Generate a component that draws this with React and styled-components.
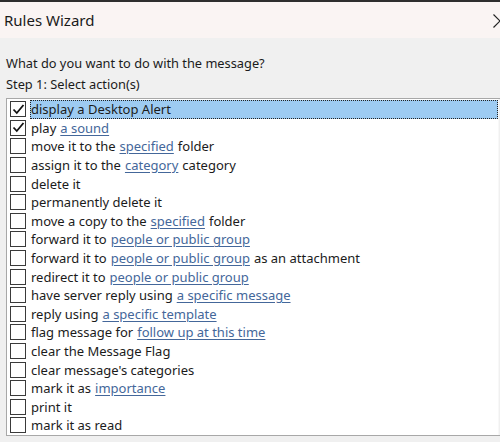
import React from 'react';
import styled, { createGlobalStyle } from 'styled-components';

const GlobalStyle = createGlobalStyle`
	body {
		margin: 0;
		overflow: hidden;
		background: #f0f0f0;
		font-family: 'Noto Sans', 'Open Sans', sans-serif;
		color: #1b1b1b;
	}
`;

const Dialog = styled.div`
	width: 521px;
	height: 442px;
	display: flex;
	flex-direction: column;
	background: #f0f0f0;
`;

const TitleBar = styled.div`
	height: 36px;
	border-top: 2px solid #2e2e2e;
	background: #faf4f3;
	display: flex;
	align-items: center;
	justify-content: space-between;
	padding: 0 14px 0 4px;
`;

const Title = styled.div`
	font-size: 15px;
	color: #1a1a1a;
`;

const CloseIcon = styled.svg`
	width: 14px;
	height: 14px;
	margin-top: 2px;
`;

const Body = styled.div`
	padding: 15px 0 0 6px;
	display: flex;
	flex-direction: column;
`;

const Prompt = styled.div`
	font-size: 12.8px;
	line-height: 20.5px;
`;

const ListBox = styled.div`
	margin-top: 4px;
	height: 336px;
	border: 1px solid #a8a8a8;
	background: #fff;
	display: flex;
`;

const Items = styled.div`
	flex: 1;
	padding-top: 1px;
	display: flex;
	flex-direction: column;
`;

const Row = styled.div`
	height: 18.6px;
	display: flex;
	align-items: center;
	font-size: 13px;
`;

const Box = styled.span`
	width: 14px;
	height: 14px;
	margin: 0 4px 0 3px;
	border: 1px solid #3a3a3a;
	background: #fff;
	flex: none;
	display: flex;
	align-items: center;
	justify-content: center;
`;

const Label = styled.span`
	flex: 1;
	height: 100%;
	display: flex;
	align-items: center;
	padding-left: 1px;
	white-space: nowrap;
	background: ${p => (p.$selected ? '#9dcbf2' : 'transparent')};
	outline: ${p => (p.$selected ? '1px dotted #222' : 'none')};
	outline-offset: -1px;
`;

const Link = styled.span`
	color: #44679a;
	text-decoration: underline;
	text-underline-offset: 2px;
	margin: 0 4px;
`;

const ScrollBar = styled.div`
	width: 21px;
	flex: none;
	background: #f0f0f0;
	border-left: 1px solid #f8f8f8;
	display: flex;
	justify-content: center;
	padding-top: 23px;
`;

const Thumb = styled.div`
	width: 7px;
	height: 249px;
	background: #858585;
`;

const actions = [
	['display a Desktop Alert'],
	['play', 'a sound'],
	['move it to the', 'specified', 'folder'],
	['assign it to the', 'category', 'category'],
	['delete it'],
	['permanently delete it'],
	['move a copy to the', 'specified', 'folder'],
	['forward it to', 'people or public group'],
	['forward it to', 'people or public group', 'as an attachment'],
	['redirect it to', 'people or public group'],
	['have server reply using', 'a specific message'],
	['reply using', 'a specific template'],
	['flag message for', 'follow up at this time'],
	['clear the Message Flag'],
	["clear message's categories"],
	['mark it as', 'importance'],
	['print it'],
	['mark it as read'],
];

const Check = () => (
	<svg width="13" height="13" viewBox="0 0 13 13">
		<path d="M1.5 6.5 L4.8 10 L11.5 2" fill="none" stroke="#111" strokeWidth="1.8" />
	</svg>
);

const App = () => {
	return (
		<Dialog>
			<GlobalStyle />
			<TitleBar>
				<Title>Rules Wizard</Title>
				<CloseIcon viewBox="0 0 14 14">
					<path d="M0.5 0.5 L13.5 13.5 M13.5 0.5 L0.5 13.5" stroke="#222" strokeWidth="1.2" />
				</CloseIcon>
			</TitleBar>
			<Body>
				<Prompt>What do you want to do with the message?</Prompt>
				<Prompt>Step 1: Select action(s)</Prompt>
				<ListBox>
					<Items>
						{actions.map(([pre, link, post], i) => (
							<Row key={i}>
								<Box>{i < 2 && <Check />}</Box>
								<Label $selected={i === 0}>
									{pre}
									{link && <Link>{link}</Link>}
									{post}
								</Label>
							</Row>
						))}
					</Items>
					<ScrollBar>
						<Thumb />
					</ScrollBar>
				</ListBox>
			</Body>
		</Dialog>
	);
};

export default App;
